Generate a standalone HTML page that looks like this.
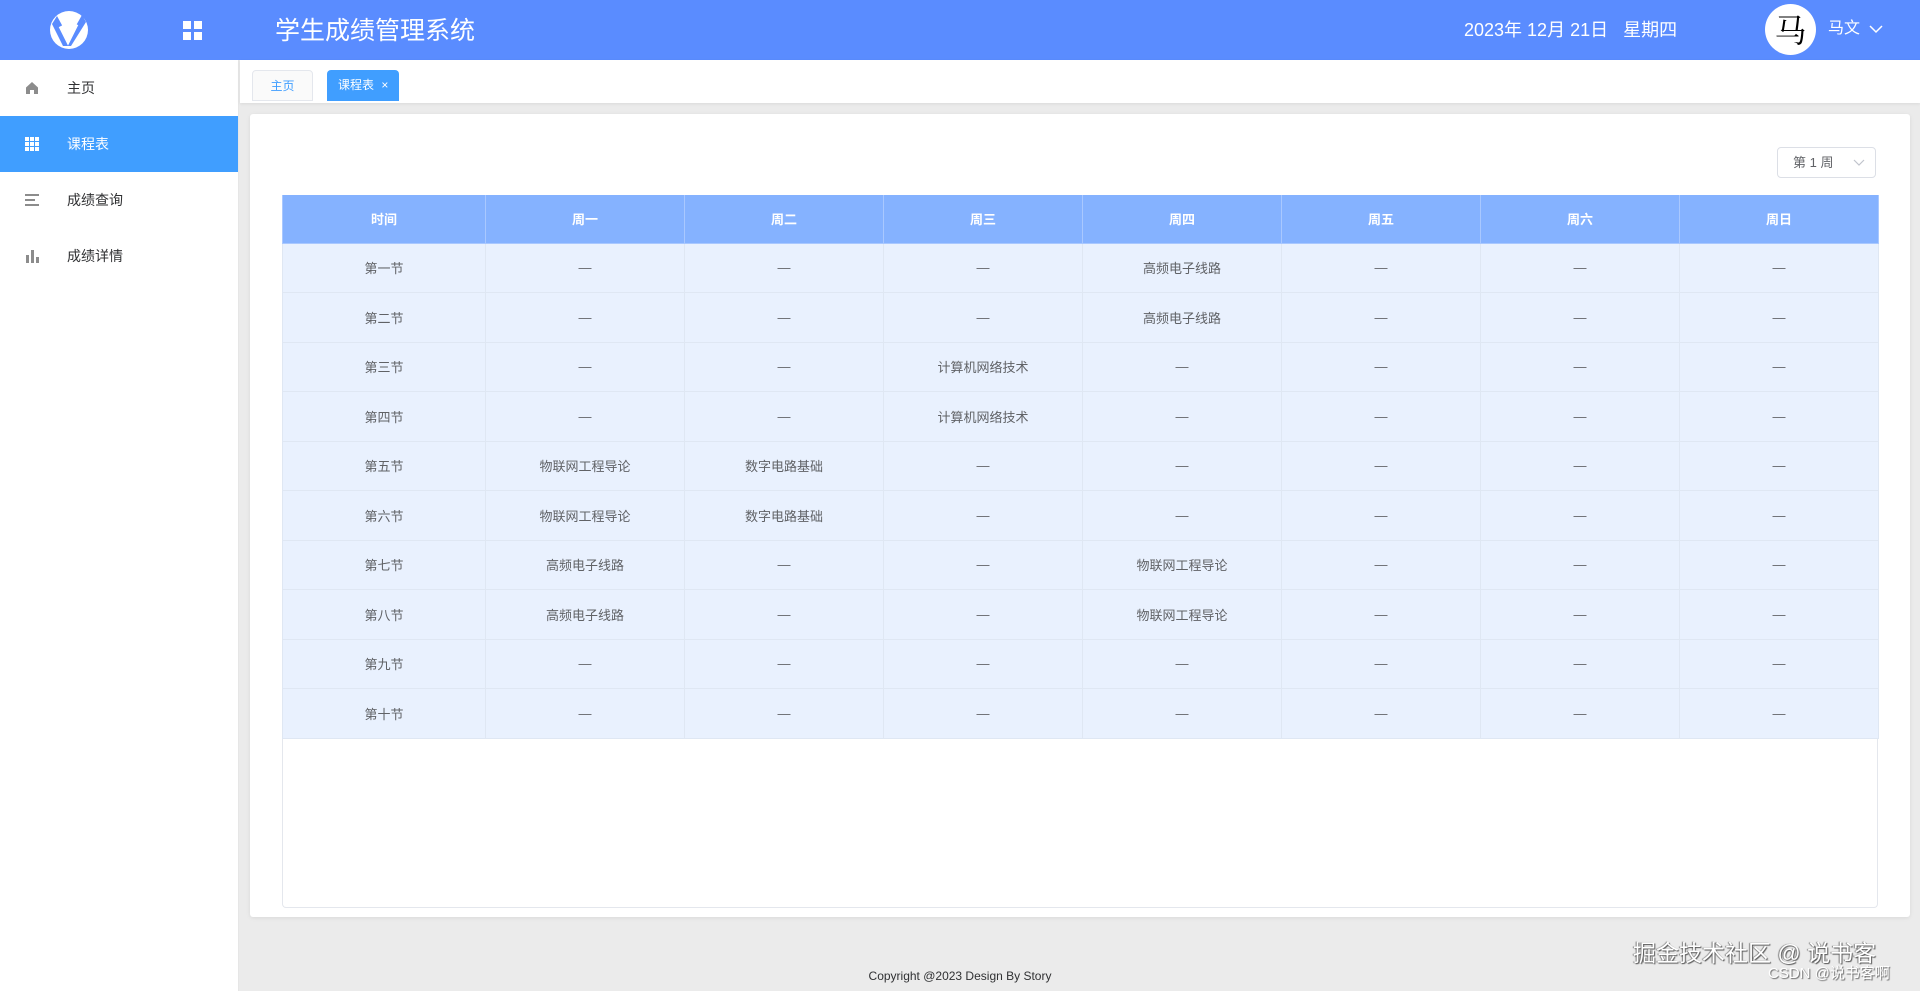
<!DOCTYPE html>
<html><head><meta charset="utf-8"><style>
*{margin:0;padding:0;box-sizing:border-box}
body{width:1920px;height:991px;overflow:hidden;font-family:"Liberation Sans","Noto Sans CJK SC",sans-serif;background:#ebebeb;position:relative}
.hd{position:absolute;left:0;top:0;width:1920px;height:60px;background:#5a8cff;color:#fff}
.sb{position:absolute;left:0;top:60px;width:239px;height:931px;background:#fff;border-right:1px solid #e6e6e6}
.it{height:56px;display:flex;align-items:center;font-size:14px;color:#303133;position:relative}
.it .ic{position:absolute;left:25px;top:21px;width:14px;height:14px}
.it span{position:absolute;left:67px}
.it.on{background:#409eff;color:#fff}
.tabs{position:absolute;left:240px;top:60px;width:1680px;height:43px;background:#fff;box-shadow:0 1px 3px rgba(0,0,0,.08)}
.tab{position:absolute;top:10px;height:31px;font-size:12px;line-height:30px;border-radius:4px 4px 0 0}
.card{position:absolute;left:250px;top:114px;width:1660px;height:803px;background:#fff;border-radius:3px;box-shadow:0 1px 4px rgba(0,0,0,.08)}
table{position:absolute;left:32px;top:81px;border-collapse:collapse;width:1596px;table-layout:fixed}
td,th{text-align:center;border:1px solid #dfe7f3;font-size:13px}
th{background:#85b2ff;color:#fff;height:48px;font-weight:bold;border-color:#a9c8ff;border-top:none}
td{background:#e9f1fe;color:#606266;height:49.5px}
.outer{position:absolute;left:32px;top:81px;width:1596px;height:713px;border:1px solid #e4e7ed;border-top:none;border-radius:4px}
</style></head><body>
<div class="hd">
<svg style="position:absolute;left:49px;top:10px" width="40" height="40" viewBox="0 0 40 40"><circle cx="20" cy="20" r="19" fill="#fff"/><path d="M8 6 L20 28 L33 5 L37 12 L22 36 L14 36 L3 14Z" fill="#5a8cff"/><path d="M12 16 L19 30 L27 14" stroke="#fff" stroke-width="5" fill="none"/></svg>
<svg style="position:absolute;left:183px;top:21px" width="19" height="19"><rect x="0" y="0" width="8" height="8" fill="#fff"/><rect x="11" y="0" width="8" height="8" fill="#fff"/><rect x="0" y="11" width="8" height="8" fill="#fff"/><rect x="11" y="11" width="8" height="8" fill="#fff"/></svg>
<div style="position:absolute;left:275px;top:15px;font-size:25px;line-height:32px">学生成绩管理系统</div>
<div style="position:absolute;left:1464px;top:18px;font-size:18px;line-height:24px">2023年 12月 21日 &nbsp;&nbsp;星期四</div>
<div style="position:absolute;left:1765px;top:4px;width:51px;height:51px;border-radius:50%;background:#fff;color:#000;font-family:'Noto Serif CJK SC',serif;font-size:32px;line-height:51px;text-align:center">马</div>
<div style="position:absolute;left:1828px;top:17px;font-size:16px;line-height:24px">马文</div>
<svg style="position:absolute;left:1869px;top:25px" width="14" height="9"><path d="M1 1 L7 7 L13 1" stroke="#fff" stroke-width="1.5" fill="none"/></svg>
</div>
<div class="sb">
<div class="it"><svg class="ic" viewBox="0 0 14 14"><path d="M7 1 L13 6.5 V13 H9 V9 H5 V13 H1 V6.5Z" fill="#8c8c8c"/></svg><span>主页</span></div>
<div class="it on"><svg class="ic" viewBox="0 0 14 14" fill="#fff"><rect x="0" y="0" width="4" height="4"/><rect x="5" y="0" width="4" height="4"/><rect x="10" y="0" width="4" height="4"/><rect x="0" y="5" width="4" height="4"/><rect x="5" y="5" width="4" height="4"/><rect x="10" y="5" width="4" height="4"/><rect x="0" y="10" width="4" height="4"/><rect x="5" y="10" width="4" height="4"/><rect x="10" y="10" width="4" height="4"/></svg><span>课程表</span></div>
<div class="it"><svg class="ic" viewBox="0 0 14 14" fill="#8c8c8c"><rect x="0" y="1" width="14" height="2"/><rect x="0" y="6" width="10" height="2"/><rect x="0" y="11" width="14" height="2"/></svg><span>成绩查询</span></div>
<div class="it"><svg class="ic" viewBox="0 0 14 14" fill="#8c8c8c"><rect x="1" y="6" width="3" height="8"/><rect x="6" y="1" width="3" height="13"/><rect x="11" y="8" width="3" height="6"/></svg><span>成绩详情</span></div>
</div>
<div class="tabs">
<div class="tab" style="left:12px;width:61px;border:1px solid #e4e7ed;color:#409eff;text-align:center;background:#fafafa">主页</div>
<div class="tab" style="left:87px;width:72px;background:#409eff;color:#fff;padding-left:11px">课程表 <span style="margin-left:4px">×</span></div>
</div>
<div class="card">
<div style="position:absolute;left:1527px;top:33px;width:99px;height:31px;border:1px solid #dcdfe6;border-radius:4px;font-size:13px;color:#606266;line-height:29px;padding-left:15px">第 1 周<svg style="position:absolute;right:10px;top:11px" width="12" height="8"><path d="M1 1 L6 6 L11 1" stroke="#c0c4cc" stroke-width="1.2" fill="none"/></svg></div>
<div class="outer"></div>
<table>
<colgroup><col style="width:203px"><col style="width:199px"><col style="width:199px"><col style="width:199px"><col style="width:199px"><col style="width:199px"><col style="width:199px"><col style="width:199px"></colgroup>
<tr><th>时间</th><th>周一</th><th>周二</th><th>周三</th><th>周四</th><th>周五</th><th>周六</th><th>周日</th></tr>
<tr><td>第一节</td><td>—</td><td>—</td><td>—</td><td>高频电子线路</td><td>—</td><td>—</td><td>—</td></tr>
<tr><td>第二节</td><td>—</td><td>—</td><td>—</td><td>高频电子线路</td><td>—</td><td>—</td><td>—</td></tr>
<tr><td>第三节</td><td>—</td><td>—</td><td>计算机网络技术</td><td>—</td><td>—</td><td>—</td><td>—</td></tr>
<tr><td>第四节</td><td>—</td><td>—</td><td>计算机网络技术</td><td>—</td><td>—</td><td>—</td><td>—</td></tr>
<tr><td>第五节</td><td>物联网工程导论</td><td>数字电路基础</td><td>—</td><td>—</td><td>—</td><td>—</td><td>—</td></tr>
<tr><td>第六节</td><td>物联网工程导论</td><td>数字电路基础</td><td>—</td><td>—</td><td>—</td><td>—</td><td>—</td></tr>
<tr><td>第七节</td><td>高频电子线路</td><td>—</td><td>—</td><td>物联网工程导论</td><td>—</td><td>—</td><td>—</td></tr>
<tr><td>第八节</td><td>高频电子线路</td><td>—</td><td>—</td><td>物联网工程导论</td><td>—</td><td>—</td><td>—</td></tr>
<tr><td>第九节</td><td>—</td><td>—</td><td>—</td><td>—</td><td>—</td><td>—</td><td>—</td></tr>
<tr><td>第十节</td><td>—</td><td>—</td><td>—</td><td>—</td><td>—</td><td>—</td><td>—</td></tr>
</table>
</div>
<div style="position:absolute;left:0;width:1920px;top:969px;text-align:center;font-size:12px;color:#303133">Copyright @2023 Design By Story</div>
<div style="position:absolute;left:1633px;top:934px;font-size:23px;color:#fff;text-shadow:1px 1px 1px #555,-1px 0 1px #777">掘金技术社区 @ 说书客</div>
<div style="position:absolute;left:1768px;top:962px;font-size:15px;color:#fff;text-shadow:1px 1px 1px #666">CSDN @说书客啊</div>
</body></html>
